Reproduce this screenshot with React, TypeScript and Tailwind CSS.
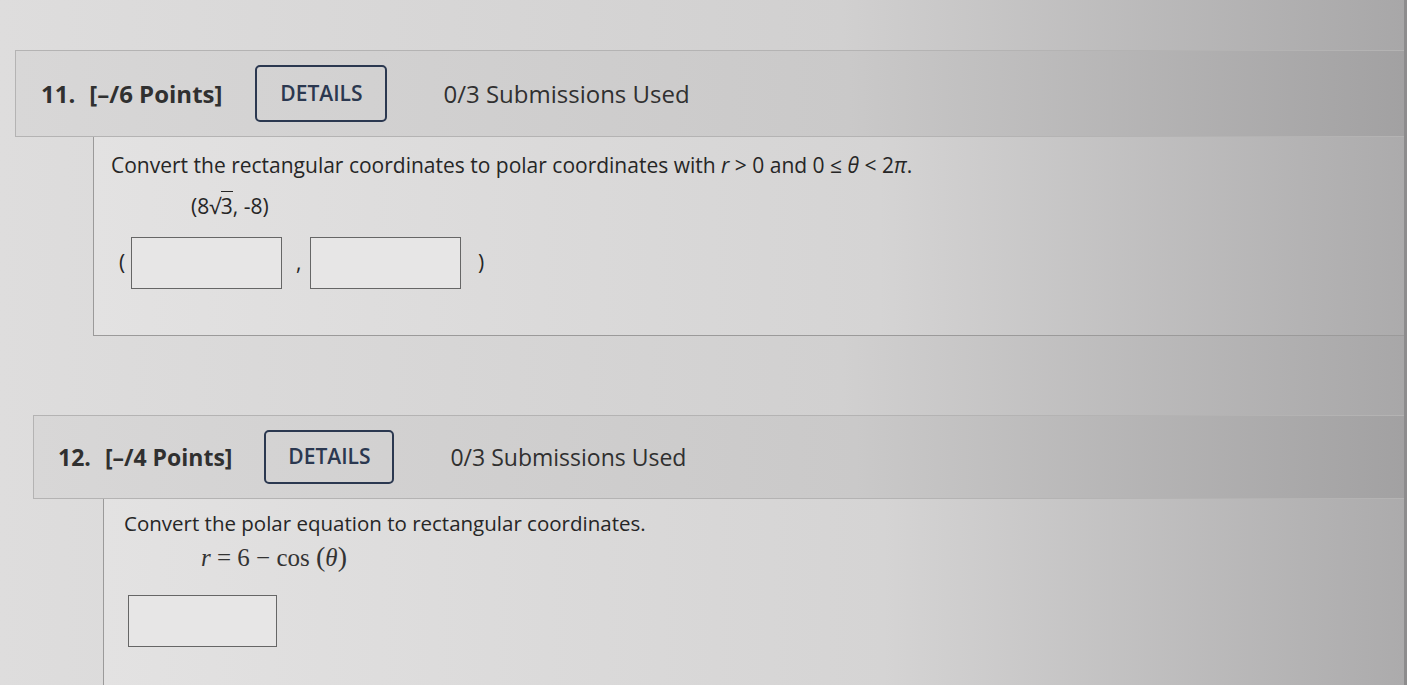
export default function App() {
  return (
    <div className="min-h-[685px] w-full overflow-hidden border-r-[3px] border-[#8d8c8d] bg-linear-to-r from-[#dedddd] via-[#d1d0d0] via-60% to-[#a8a7a8] pt-[50px] font-['Open_Sans',sans-serif] text-[#262626]">
      <Question
        number="11."
        points="[–/6 Points]"
        headerClass="ml-[15px] h-[87px] pl-[25px] text-[24px]"
        buttonClass="ml-[33px] h-[57px] w-[132px]"
        usedClass="ml-[56px]"
        bodyClass="ml-[93px] h-[199px] pl-[17px] pt-[13px]"
      >
        <p className="text-[21px] leading-[30px] font-medium">
          Convert the rectangular coordinates to polar coordinates with <i>r</i>{" "}
          &gt; 0 and 0 ≤ <i>θ</i> &lt; 2<i>π</i>.
        </p>
        <p className="mt-[11px] ml-[80px] text-[21px] leading-[30px] font-medium">
          (8√<span className="border-t-[1.5px] border-[#262626]">3</span>, -8)
        </p>
        <div className="mt-[16px] flex items-center text-[21px]">
          <span className="ml-[8px] w-[12px]">(</span>
          <AnswerBox className="w-[151px]" />
          <span className="ml-[14px] w-[14px]">,</span>
          <AnswerBox className="w-[151px]" />
          <span className="ml-[17px]">)</span>
        </div>
      </Question>

      <div className="h-[79px]" />

      <Question
        number="12."
        points="[–/4 Points]"
        headerClass="ml-[33px] h-[84px] pl-[24px] text-[23px]"
        buttonClass="ml-[32px] h-[54px] w-[130px]"
        usedClass="ml-[56px]"
        bodyClass="ml-[103px] h-[190px] pl-[20px] pt-[9px]"
      >
        <p className="text-[20.5px] leading-[30px] font-medium">
          Convert the polar equation to rectangular coordinates.
        </p>
        <p className="mt-[4px] ml-[77px] font-['Liberation_Serif',serif] text-[25px] leading-[30px] text-[#333]">
          <i>r</i> = 6 − cos <span className="text-[28px]">(</span>
          <i>θ</i>
          <span className="text-[28px]">)</span>
        </p>
        <div className="mt-[22px] ml-[4px] flex">
          <AnswerBox className="w-[149px]" />
        </div>
      </Question>
    </div>
  );
}

function Question({
  number,
  points,
  headerClass,
  buttonClass,
  usedClass,
  bodyClass,
  children,
}: {
  number: string;
  points: string;
  headerClass: string;
  buttonClass: string;
  usedClass: string;
  bodyClass: string;
  children: React.ReactNode;
}) {
  return (
    <section>
      <div
        className={`flex items-center border-t border-b border-l border-[#b4b3b3] bg-linear-to-r from-[#d8d7d7] via-[#cac9c9] via-60% to-[#a2a1a2] text-[#303030] ${headerClass}`}
      >
        <span className="font-bold">{number}</span>
        <span className="ml-[14px] font-bold">{points}</span>
        <button
          className={`flex items-center justify-center rounded-[5px] border-[2.5px] border-[#2b3850] text-[21px] font-semibold text-[#2b3850] ${buttonClass}`}
        >
          DETAILS
        </button>
        <span className={usedClass}>0/3 Submissions Used</span>
      </div>
      <div
        className={`border-b border-l border-[#9b9a9a] bg-linear-to-r from-[#e3e2e2] via-[#d5d4d4] via-60% to-[#acabac] ${bodyClass}`}
      >
        {children}
      </div>
    </section>
  );
}

function AnswerBox({ className }: { className: string }) {
  return (
    <div
      className={`h-[52px] border-[1.5px] border-[#666] bg-[#e7e6e6] ${className}`}
    />
  );
}
